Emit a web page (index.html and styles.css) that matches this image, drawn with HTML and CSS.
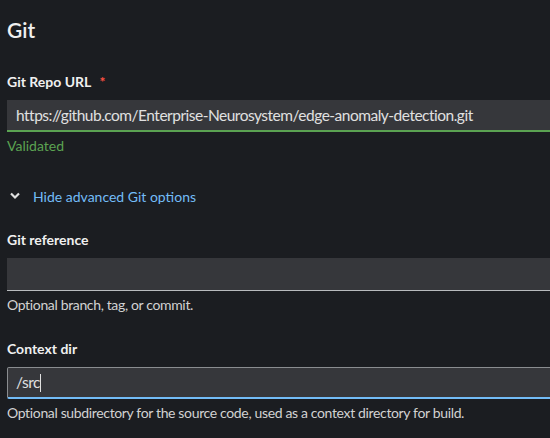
FILE: index.html
```html
<!DOCTYPE html>
<html>
<head>
<meta charset="utf-8">
<link rel="stylesheet" href="styles.css">
</head>
<body>
<div class="form">
  <h2 class="title">Git</h2>

  <div class="group g-url">
    <label class="label">Git Repo URL <span class="req">*</span></label>
    <div class="input valid">https://github.com/Enterprise-Neurosystem/edge-anomaly-detection.git</div>
    <div class="helper success">Validated</div>
  </div>

  <div class="toggle">
    <svg class="chev" width="10" height="8" viewBox="0 0 10 8"><path d="M1 1.5 L5 5.5 L9 1.5" fill="none" stroke="#e0e0e0" stroke-width="2.2"/></svg>
    <span class="link">Hide advanced Git options</span>
  </div>

  <div class="group g-ref">
    <label class="label">Git reference</label>
    <div class="input plain"></div>
    <div class="helper">Optional branch, tag, or commit.</div>
  </div>

  <div class="group g-dir">
    <label class="label">Context dir</label>
    <div class="input focus">/src<span class="caret"></span></div>
    <div class="helper">Optional subdirectory for the source code, used as a context directory for build.</div>
  </div>
</div>
</body>
</html>
```

FILE: styles.css
```css
html, body {
  margin: 0;
  padding: 0;
  background: #1b1d21;
  overflow: hidden;
  width: 550px;
  height: 438px;
}
body {
  font-family: Lato, "Noto Sans", sans-serif;
  color: #e0e0e0;
}
.form {
  padding: 17px 0 0 7px;
  display: flex;
  flex-direction: column;
}
.title {
  margin: 0;
  font-size: 21px;
  font-weight: 600;
  line-height: 26px;
  color: #f0f0f0;
}
.group {
  display: flex;
  flex-direction: column;
}
.g-url { margin-top: 29px; }
.label {
  font-size: 14px;
  font-weight: 700;
  line-height: 20px;
  color: #f0f0f0;
  margin-bottom: 8px;
}
.req {
  color: #fe5142;
  margin-left: 5px;
}
.input {
  width: 560px;
  height: 30px;
  box-sizing: content-box;
  background: #36373b;
  font-size: 15.5px;
  letter-spacing: -0.5px;
  line-height: 30px;
  padding: 0 9px;
  color: #e0e0e0;
  white-space: nowrap;
}
.input.valid { border-bottom: 2px solid #5ba352; }
.input.plain { height: 32px; border-bottom: 1px solid #b8bbbe; }
.input.focus {
  height: 29px;
  line-height: 29px;
  border: 1px solid #8a8d90;
  border-bottom: 2px solid #73bcf7;
  border-radius: 2px;
  padding-left: 8px;
}
.caret {
  display: inline-block;
  width: 1px;
  height: 18px;
  background: #e0e0e0;
  vertical-align: -4px;
}
.helper {
  font-size: 14px;
  letter-spacing: -0.35px;
  line-height: 20px;
  margin-top: 4px;
  color: #d2d2d2;
}
.success { color: #5ba352; letter-spacing: 0; }
.toggle {
  margin-top: 30px;
  display: flex;
  align-items: center;
  height: 20px;
  font-size: 14px;
}
.chev { margin-left: 3px; margin-right: 13px; }
.link { color: #73bcf7; }
.g-ref { margin-top: 24px; }
.g-dir { margin-top: 24px; }
```
